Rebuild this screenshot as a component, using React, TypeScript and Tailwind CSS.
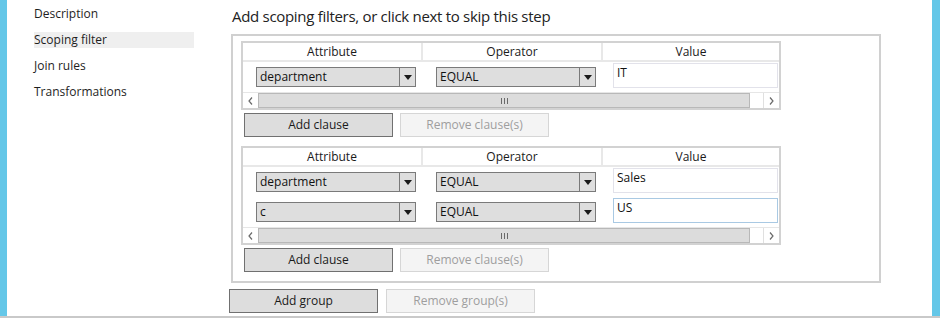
import React from "react";

const navItems = ["Description", "Scoping filter", "Join rules", "Transformations"];

function Arrow() {
	return (
		<svg width="8" height="5" viewBox="0 0 8 5">
			<path d="M0 0 H8 L4 5 Z" fill="#1a1a1a" />
		</svg>
	);
}

function Dropdown({ text }: { text: string }) {
	return (
		<div className="flex w-[160px] h-[20px] border border-[#7a7a7a] bg-[#dedede]">
			<span className="flex-1 pl-[3px] text-[12px] leading-[18px] text-[#111]">{text}</span>
			<div className="w-[16px] border-l border-[#7a7a7a] flex items-center justify-center">
				<Arrow />
			</div>
		</div>
	);
}

function ValueBox({ text, focus }: { text: string; focus?: boolean }) {
	return (
		<div
			className={`w-[165px] h-[25px] bg-white border pl-[3px] text-[12px] leading-[17px] text-[#111] ${
				focus ? "border-[#a9c9e3]" : "border-[#e2e2ea]"
			}`}
		>
			{text}
		</div>
	);
}

function Chevron({ left }: { left?: boolean }) {
	return (
		<svg width="5" height="8" viewBox="0 0 5 8">
			<path
				d={left ? "M4 0.5 L1 4 L4 7.5" : "M1 0.5 L4 4 L1 7.5"}
				fill="none"
				stroke="#6a6a6a"
				strokeWidth="1.2"
			/>
		</svg>
	);
}

function ScrollBar() {
	return (
		<div className="flex h-[16px] bg-white border-t border-[#e6e6e6]">
			<div className="w-[15px] flex items-center justify-center">
				<Chevron left />
			</div>
			<div className="w-[492px] bg-[#dcdcdc] border border-[#b8b8b8] flex items-center justify-center">
				<div className="flex gap-[2px]">
					<div className="w-[1px] h-[6px] bg-[#6a6a6a]" />
					<div className="w-[1px] h-[6px] bg-[#6a6a6a]" />
					<div className="w-[1px] h-[6px] bg-[#6a6a6a]" />
				</div>
			</div>
			<div className="flex-1" />
			<div className="w-[16px] border-l border-[#e0e0e0] flex items-center justify-center">
				<Chevron />
			</div>
		</div>
	);
}

function Grid({ rows }: { rows: { attr: string; op: string; value: string; focus?: boolean }[] }) {
	return (
		<div className="w-[540px] border-2 border-[#d2d2d2]">
			<div className="flex h-[19px] border-b-2 border-[#e8e8e8] text-[12px] leading-[17px] text-[#1a1a1a]">
				<div className="w-[180px] border-r-2 border-[#e8e8e8] text-center">Attribute</div>
				<div className="w-[180px] border-r-2 border-[#e8e8e8] text-center">Operator</div>
				<div className="flex-1 text-center">Value</div>
			</div>
			{rows.map((r, i) => (
				<div key={i} className="flex h-[30px]">
					<div className="w-[180px] pl-[13px] pt-[5px]">
						<Dropdown text={r.attr} />
					</div>
					<div className="w-[180px] pl-[13px] pt-[5px]">
						<Dropdown text={r.op} />
					</div>
					<div className="flex-1 pl-[10px] pt-[1px]">
						<ValueBox text={r.value} focus={r.focus} />
					</div>
				</div>
			))}
			<ScrollBar />
		</div>
	);
}

function Button({ label, disabled }: { label: string; disabled?: boolean }) {
	return (
		<button
			className={`w-[149px] h-[24px] border text-[12px] ${
				disabled
					? "bg-[#f4f4f4] border-[#d6d6d6] text-[#9e9e9e]"
					: "bg-[#dddddd] border-[#707070] text-[#1a1a1a]"
			}`}
		>
			{label}
		</button>
	);
}

export default function App() {
	return (
		<div className="w-[940px] h-[318px] flex border-b-2 border-[#c9c9c9] bg-white font-['Open_Sans',sans-serif]">
			<div className="w-[7px] bg-[#64c7e8]" />
			<div className="w-[222px] pl-[27px] pt-[6px] flex flex-col gap-[10px]">
				{navItems.map((item) => (
					<div
						key={item}
						className={`h-[16px] w-[160px] text-[12px] leading-[16px] text-[#1e1e1e] ${
							item === "Scoping filter" ? "bg-[#efefef]" : ""
						}`}
					>
						{item}
					</div>
				))}
			</div>
			<div className="flex-1 flex flex-col">
				<div className="h-[34px] pl-[3px] pt-[5px] text-[15px] leading-[22px] tracking-[-0.3px] text-[#222]">
					Add scoping filters, or click next to skip this step
				</div>
				<div className="ml-[2px] w-[650px] border-2 border-[#d0d0d0] pl-[8px] pt-[5px] pb-[9px]">
					<Grid rows={[{ attr: "department", op: "EQUAL", value: "IT" }]} />
					<div className="flex gap-[7px] ml-[3px] mt-[3px]">
						<Button label="Add clause" />
						<Button label="Remove clause(s)" disabled />
					</div>
					<div className="mt-[9px]">
						<Grid
							rows={[
								{ attr: "department", op: "EQUAL", value: "Sales" },
								{ attr: "c", op: "EQUAL", value: "US", focus: true },
							]}
						/>
					</div>
					<div className="flex gap-[7px] ml-[3px] mt-[3px]">
						<Button label="Add clause" />
						<Button label="Remove clause(s)" disabled />
					</div>
				</div>
				<div className="flex gap-[8px] mt-[6px]">
					<Button label="Add group" />
					<Button label="Remove group(s)" disabled />
				</div>
			</div>
			<div className="w-[8px] bg-[#64c7e8]" />
		</div>
	);
}
